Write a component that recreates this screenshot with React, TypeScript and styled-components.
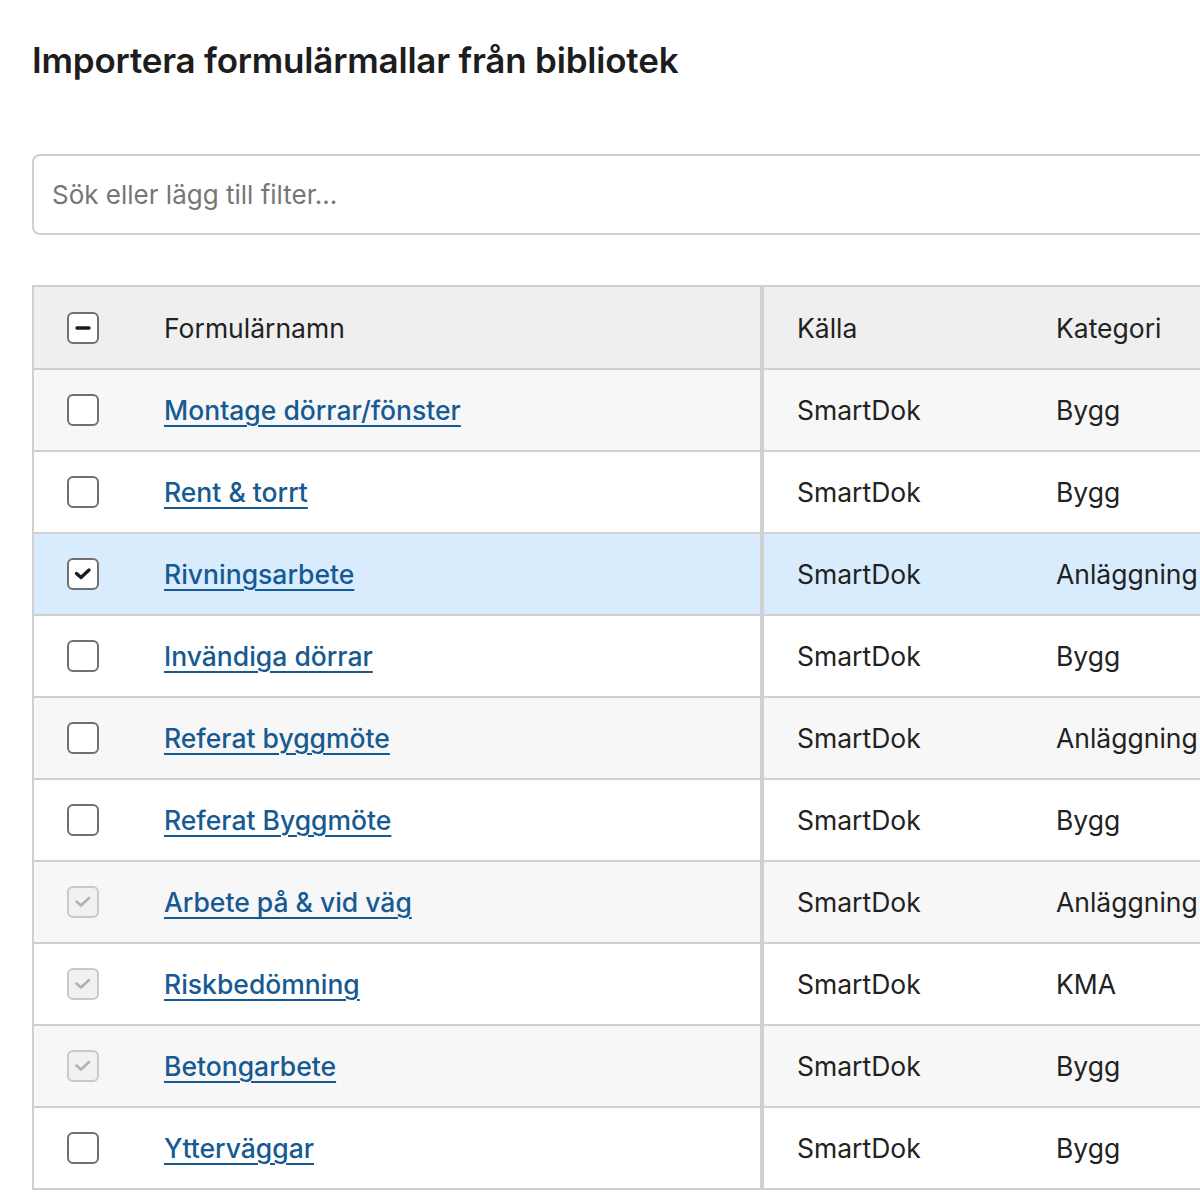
import React from 'react'
import styled, { createGlobalStyle } from 'styled-components'

const Global = createGlobalStyle`
	html, body {
		margin:0;
		padding:0;
		background:#fff;
		overflow:hidden;
	}
	body {
		font-family:Inter, "Noto Sans", sans-serif;
		color:#222;
	}
`

const S = {
	Page : styled.div`
		padding:36px 0 0 32px;
		width:1500px;
	`,
	Title : styled.h1`
		margin:0;
		font-size:35px;
		font-weight:600;
		letter-spacing:-0.2px;
		color:#1d1d1d;
		line-height:48px;
	`,
	Search : styled.input`
		display:block;
		box-sizing:border-box;
		margin-top:70px;
		width:1300px;
		height:81px;
		padding:0 18px;
		border:2px solid #cfcfcf;
		border-radius:8px;
		font-family:inherit;
		font-size:26px;
		color:#222;
		outline:none;
		&::placeholder {
			color:#767676;
		}
	`,
	Table : styled.table`
		margin-top:50px;
		width:1400px;
		border-collapse:collapse;
		border:2px solid #d0d0d0;
		table-layout:fixed;
	`,
	HeadRow : styled.tr`
		background:#efefef;
		height:83px;
	`,
	Row : styled.tr<{ $selected?: boolean; $odd?: boolean }>`
		height:82px;
		background:${(p) => (p.$selected ? '#d9ecfd' : p.$odd ? '#f7f7f7' : '#fff')};
		border-top:2px solid #d0d0d0;
	`,
	Cell : styled.td<{ $divider?: boolean }>`
		padding:0 0 0 ${(p) => (p.$divider ? '33px' : '0')};
		font-size:26.5px;
		font-weight:400;
		text-align:left;
		vertical-align:middle;
		white-space:nowrap;
		border-left:${(p) => (p.$divider ? '4px solid #d0d0d0' : 'none')};
	`,
	CheckCell : styled.td`
		width:131px;
		padding:0 0 0 33px;
		box-sizing:border-box;
		vertical-align:middle;
	`,
	Link : styled.a`
		color:#165a93;
		font-weight:500;
		text-decoration:underline;
		text-decoration-thickness:2px;
		text-underline-offset:5px;
	`,
}

const Box = styled.span<{ $disabled?: boolean }>`
	display:flex;
	align-items:center;
	justify-content:center;
	box-sizing:border-box;
	width:32px;
	height:32px;
	border:2px solid ${(p) => (p.$disabled ? '#c9c9c9' : '#707070')};
	border-radius:6px;
	background:${(p) => (p.$disabled ? '#f1f1f1' : '#fff')};
	color:${(p) => (p.$disabled ? '#b0b0b0' : '#1d1d1d')};
`

type CheckState = 'off' | 'on' | 'partial' | 'disabled'

function Check({ state }: { state: CheckState }) {
	return (
		<Box $disabled={state === 'disabled'}>
			{state === 'partial' && (
				<svg width="18" height="18" viewBox="0 0 18 18">
					<path d="M3 9h12" stroke="currentColor" strokeWidth="3.4" strokeLinecap="round" />
				</svg>
			)}
			{(state === 'on' || state === 'disabled') && (
				<svg width="20" height="20" viewBox="0 0 20 20">
					<path d="M3.5 9.5l4.5 4 8-7.5" fill="none" stroke="currentColor" strokeWidth={state === 'on' ? 3.4 : 2.4} strokeLinecap="round" strokeLinejoin="round" />
				</svg>
			)}
		</Box>
	)
}

const rows: { name: string; category: string; state: CheckState }[] = [
	{ name: 'Montage dörrar/fönster', category: 'Bygg', state: 'off' },
	{ name: 'Rent & torrt', category: 'Bygg', state: 'off' },
	{ name: 'Rivningsarbete', category: 'Anläggning', state: 'on' },
	{ name: 'Invändiga dörrar', category: 'Bygg', state: 'off' },
	{ name: 'Referat byggmöte', category: 'Anläggning', state: 'off' },
	{ name: 'Referat Byggmöte', category: 'Bygg', state: 'off' },
	{ name: 'Arbete på & vid väg', category: 'Anläggning', state: 'disabled' },
	{ name: 'Riskbedömning', category: 'KMA', state: 'disabled' },
	{ name: 'Betongarbete', category: 'Bygg', state: 'disabled' },
	{ name: 'Ytterväggar', category: 'Bygg', state: 'off' },
]

export default function App() {
	return (
		<S.Page>
			<Global />
			<S.Title>Importera formulärmallar från bibliotek</S.Title>
			<S.Search placeholder="Sök eller lägg till filter..." />
			<S.Table>
				<colgroup>
					<col style={{ width: 131 }} />
					<col style={{ width: 598 }} />
					<col style={{ width: 294 }} />
					<col />
				</colgroup>
				<thead>
					<S.HeadRow>
						<S.CheckCell as="th"><Check state="partial" /></S.CheckCell>
						<S.Cell as="th">Formulärnamn</S.Cell>
						<S.Cell as="th" $divider>Källa</S.Cell>
						<S.Cell as="th">Kategori</S.Cell>
					</S.HeadRow>
				</thead>
				<tbody>
					{rows.map((r, i) => (
						<S.Row key={r.name} $odd={i % 2 === 0} $selected={r.state === 'on'}>
							<S.CheckCell><Check state={r.state} /></S.CheckCell>
							<S.Cell><S.Link href="#">{r.name}</S.Link></S.Cell>
							<S.Cell $divider>SmartDok</S.Cell>
							<S.Cell>{r.category}</S.Cell>
						</S.Row>
					))}
				</tbody>
			</S.Table>
		</S.Page>
	)
}
